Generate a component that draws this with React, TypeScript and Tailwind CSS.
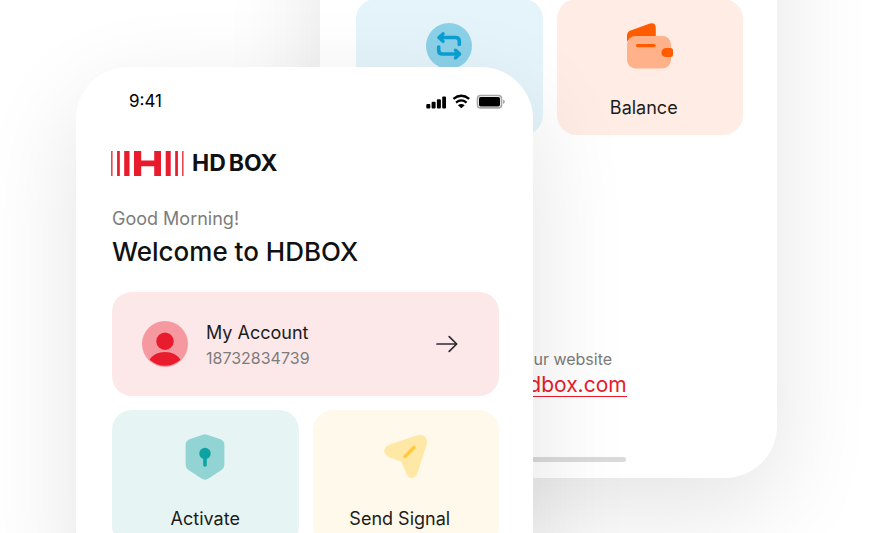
import type { ReactNode } from "react";

const phoneShell = "w-[457px] bg-white pl-9 pr-[34px] shadow-[0_32px_100px_rgba(0,0,0,0.11)]";

function SwapIcon() {
  return (
    <svg width="46" height="46" viewBox="0 0 46 46" fill="none" aria-hidden="true">
      <circle cx="23" cy="23" r="23" fill="#8BD1E8" />
      <g stroke="#0A9FD3" strokeWidth="3.6" strokeLinecap="round" strokeLinejoin="round">
        <path d="M13.5 14.5H29.5Q33.300 14.500 33.300 18.300V21.500" />
        <path d="M17 11L13 14.500L17 18.200" />
        <path d="M33 31H16.500Q12.700 31 12.700 27.200V24" />
        <path d="M29.500 27.300L33.500 31L29.500 34.700" />
      </g>
    </svg>
  );
}

function WalletIcon() {
  return (
    <svg width="46" height="46" viewBox="0 0 46 46" fill="none" aria-hidden="true">
      <path d="M0 19V12.5Q0 8.8 3.6 7.5L23 0.4Q28.8 -1 28.8 5V16H5Q1 16 0 19Z" fill="#FF5C00" />
      <rect y="13" width="44" height="32.6" rx="8.5" fill="#FFB28A" />
      <path d="M10.5 22.6H27" stroke="#FF5C00" strokeWidth="3.2" strokeLinecap="round" />
      <path d="M39.5 25H43.5Q46 25 46 27.5V31.5Q46 34 43.5 34H39.5Q34.5 34 34.5 29.5Q34.5 25 39.5 25Z" fill="#FF5C00" />
    </svg>
  );
}

function ShieldIcon() {
  return (
    <svg width="46" height="46" viewBox="0 0 46 46" fill="none" aria-hidden="true">
      <path
        d="M20.8 0.8Q23 -0.1 25.2 0.8L38.5 5.3Q42.4 6.8 42.4 11V30.5Q42.4 34 39.5 36L26.5 44.6Q23 46.8 19.5 44.6L6.5 36Q3.6 34 3.6 30.5V11Q3.6 6.8 7.5 5.3Z"
        fill="#92D4D3"
      />
      <circle cx="23" cy="19.5" r="5.7" fill="#0EA3A2" />
      <path d="M23 20V31" stroke="#0EA3A2" strokeWidth="3.6" strokeLinecap="round" />
    </svg>
  );
}

function SendIcon() {
  return (
    <svg width="46" height="46" viewBox="0 0 46 46" fill="none" aria-hidden="true">
      <path
        d="M6.500 10.500L33.500 1.600C40 -0.400 45.500 3.500 43.500 10.500L35 37.500C32 46.500 25.500 46.500 22.500 37.500L18 27.500L8 24C-1 20.500 -0.500 13.500 6.500 10.500Z"
        fill="#FFE7A6"
      />
      <path d="M22 22.500L31 13.500" stroke="#FFC93C" strokeWidth="3.400" strokeLinecap="round" />
    </svg>
  );
}

function AvatarIcon() {
  return (
    <svg width="46" height="46" viewBox="0 0 46 46" fill="none" aria-hidden="true">
      <circle cx="23" cy="23" r="23" fill="#F6989F" />
      <circle cx="23" cy="20.2" r="8.7" fill="#E81C2C" />
      <path d="M7.6 38.8C10.5 34 16 31 23 31C30 31 35.500 34 38.400 38.800A23 23 0 0 1 7.600 38.800Z" fill="#E81C2C" />
    </svg>
  );
}

function StatusIcons() {
  return (
    <svg width="80" height="16" viewBox="0 0 80 16" fill="none" aria-hidden="true">
      <g fill="#000">
        <rect x="0.3" y="10" width="4" height="4.600" rx="1" />
        <rect x="5.600" y="7.800" width="4" height="6.800" rx="1" />
        <rect x="10.900" y="5.200" width="4" height="9.400" rx="1" />
        <rect x="16.200" y="2.600" width="3.800" height="12" rx="1" />
        <path d="M35.300 14.200L31.900 11.300Q35.300 8.900 38.700 11.300Z" />
      </g>
      <path d="M27.400 4.900Q35.300 -1.200 43.200 4.900" stroke="#000" strokeWidth="2.400" />
      <path d="M30 8.600Q35.300 4.300 40.600 8.600" stroke="#000" strokeWidth="2.200" />
      <rect x="51.500" y="1.500" width="24" height="12.400" rx="3" stroke="#A6A6A6" strokeWidth="1.600" />
      <rect x="53" y="3" width="21" height="9.400" rx="1.600" fill="#000" />
      <path d="M77 5.600Q78.900 6.400 78.900 7.800Q78.900 9.200 77 10Z" fill="#A6A6A6" />
    </svg>
  );
}

function BarcodeMark() {
  return (
    <svg width="73" height="25" viewBox="0 0 73 25" fill="#E81C2C" aria-hidden="true">
      <rect x="0.200" width="1.300" height="25" />
      <rect x="6.100" width="2.700" height="25" />
      <rect x="13.200" width="5.300" height="25" />
      <path d="M23 0H30.200V9.500H43.200V0H50V25H43.200V15.200H30.200V25H23Z" />
      <rect x="54.700" width="5" height="25" />
      <rect x="64.200" width="2.700" height="25" />
      <rect x="71.200" width="1.300" height="25" />
    </svg>
  );
}

function ArrowIcon() {
  return (
    <svg width="22" height="18" viewBox="0 0 22 18" fill="none" stroke="#2B2B33" strokeWidth="1.7" strokeLinecap="round" strokeLinejoin="round" aria-hidden="true">
      <path d="M1 9H20.500M13.200 1.700L20.700 9L13.200 16.300" />
    </svg>
  );
}

function Tile({ icon, label, color }: { icon: ReactNode; label: string; color: string }) {
  return (
    <button type="button" className={`group flex h-[136px] flex-col items-center rounded-[20px] pt-6 text-lg text-[#1c1c1c] ${color}`}>
      {icon}
      <span className="mt-[25px] group-even:pr-3">{label}</span>
    </button>
  );
}

function HomeScreen() {
  return (
    <section className={`${phoneShell} relative z-10 mt-[67px] ml-[76px] rounded-t-[52px] pb-9`}>
      <div className="flex h-[70px] items-center justify-between pl-[17px]">
        <span className="text-[17px] text-black">9:41</span>
        <div className="-mr-[7px]">
          <StatusIcons />
        </div>
      </div>
      <div className="-ml-px mt-[14px] flex h-[25px] items-center gap-2">
        <BarcodeMark />
        <span className="flex gap-[3px] text-[23px] font-bold text-[#111]">
          <span>HD</span>
          <span>BOX</span>
        </span>
      </div>
      <p className="mt-[29px] text-lg text-[#7c7c7c]">Good Morning!</p>
      <h1 className="mt-px text-[26px] leading-9 font-medium text-[#111]">Welcome to HDBOX</h1>
      <button type="button" className="mt-[22px] flex h-[104px] w-full items-center rounded-[20px] bg-[#fde8e9] pr-[41px] pl-[30px] text-left">
        <AvatarIcon />
        <span className="ml-[18px] flex flex-1 flex-col pt-0.5">
          <span className="text-lg leading-[26px] text-[#1c1c1c]">My Account</span>
          <span className="text-base text-[#7c7c7c]">18732834739</span>
        </span>
        <ArrowIcon />
      </button>
      <div className="mt-[14px] grid grid-cols-2 gap-[14px]">
        <Tile icon={<ShieldIcon />} label="Activate" color="bg-[#e6f5f4]" />
        <Tile icon={<SendIcon />} label="Send Signal" color="bg-[#fff9eb]" />
      </div>
    </section>
  );
}

function ScrolledScreen() {
  return (
    <section className={`${phoneShell} -mt-[301px] ml-[320px] rounded-b-[52px] pt-[300px] pb-4`}>
      <div className="grid grid-cols-2 gap-[14px]">
        <Tile icon={<SwapIcon />} label="Renew" color="bg-[#e4f4fa]" />
        <Tile icon={<WalletIcon />} label="Balance" color="bg-[#ffede5]" />
      </div>
      <div className="mt-[212px] flex flex-col items-center">
        <p className="text-base text-[#7c7c7c]">Visit our website</p>
        <a href="#website" className="mt-[3px] border-b border-current text-[21px] leading-[22px] text-[#e81c2c]">
          app.hdbox.com
        </a>
        <div className="mt-[60px] h-[5px] w-[152px] rounded-full bg-[#dadada]" />
      </div>
    </section>
  );
}

export default function App() {
  return (
    <main className="grid h-screen items-start overflow-hidden bg-white font-[Inter,'Liberation_Sans',sans-serif] *:col-start-1 *:row-start-1">
      <ScrolledScreen />
      <HomeScreen />
    </main>
  );
}
